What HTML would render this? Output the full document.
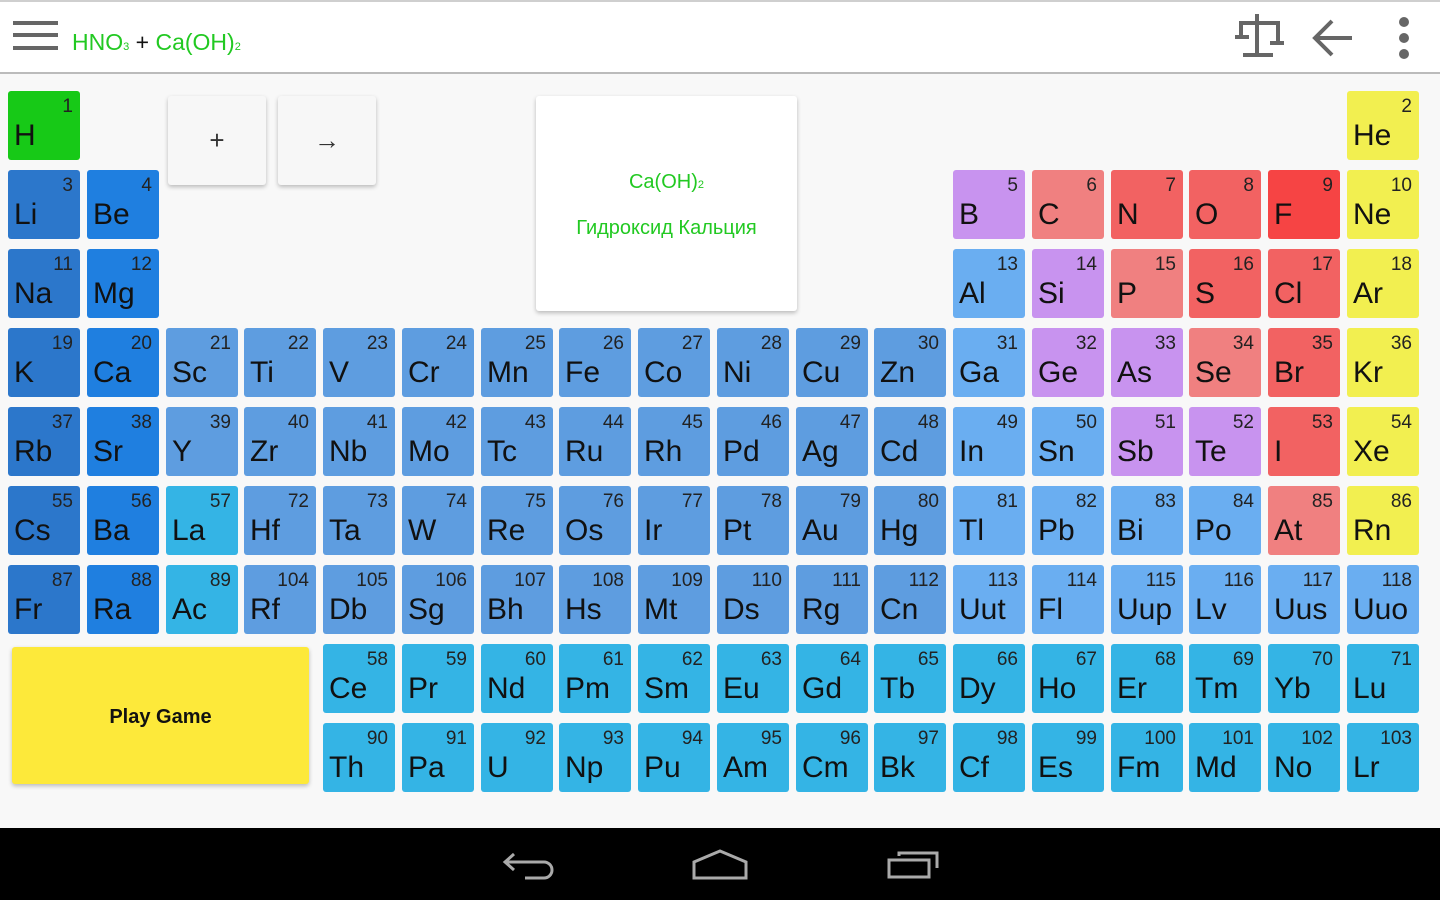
<!DOCTYPE html>
<html><head><meta charset="utf-8"><style>
body{margin:0;width:1440px;height:900px;overflow:hidden;background:#f8f8f8;font-family:"Liberation Sans","Roboto",sans-serif;position:relative}
.hdr{position:absolute;left:0;top:0;width:1440px;height:74px;background:#fff;border-top:2px solid #cfcfcf;border-bottom:2px solid #bbb;box-sizing:border-box}
.c{position:absolute;width:72px;height:69px;border-radius:3px;color:#111;font-size:30px}
.c i{position:absolute;right:7px;top:5px;font-style:normal;font-size:19px;color:#222}
.c b{position:absolute;left:6px;top:28px;font-weight:normal;line-height:34px}
.a{background:#2c77cb}.e{background:#1f7fe0}.t{background:#5e9de0}.p{background:#6aaef1}.m{background:#c893ef}.n{background:#f08080}.r{background:#f26262}.f{background:#f64444}.g{background:#f2ef50}.l{background:#34b4e5}.h{background:#17c917}
.btn{position:absolute;background:#f7f7f7;border-radius:3px;box-shadow:0 2px 4px rgba(0,0,0,.25);display:flex;align-items:center;justify-content:center;color:#333}
.nav{position:absolute;left:0;top:828px;width:1440px;height:72px;background:#000}
</style></head><body>
<div class="hdr">
<svg style="position:absolute;left:13px;top:18px" width="46" height="34"><g fill="#666"><rect x="0" y="1" width="45" height="4"/><rect x="0" y="13" width="45" height="4"/><rect x="0" y="26" width="45" height="4"/></g></svg>
<div style="position:absolute;left:72px;top:27px;font-size:23px;color:#22c922">HNO<span style="font-size:11px">3</span> <span style="color:#111">+</span> Ca(OH)<span style="font-size:11px">2</span></div>
<svg style="position:absolute;left:1230px;top:6px" width="60" height="56" fill="none" stroke="#666" stroke-width="4"><path d="M27 6V47M11 15H48M11 13V29M5 29H19M48 13V35M40 35H54M13 47H43"/></svg>
<svg style="position:absolute;left:1312px;top:16px" width="42" height="40" fill="none" stroke="#666" stroke-width="4"><path d="M40 20H4M20 3L3 20L20 37"/></svg>
<svg style="position:absolute;left:1396px;top:14px" width="16" height="44" fill="#666"><circle cx="8" cy="6" r="5"/><circle cx="8" cy="22" r="5"/><circle cx="8" cy="38" r="5"/></svg>
</div>

<div class="btn" style="left:168px;top:96px;width:98px;height:89px;font-size:26px">+</div>
<div class="btn" style="left:278px;top:96px;width:98px;height:89px;font-size:26px">→</div>
<div class="btn" style="left:536px;top:96px;width:261px;height:215px;background:#fff;flex-direction:column;color:#22c922;font-size:20px"><div style="margin-top:4px">Ca(OH)<span style="font-size:11px">2</span></div><div style="margin-top:23px">Гидроксид Кальция</div></div>
<div class="btn" style="left:12px;top:647px;width:297px;height:137px;background:#fde93a;color:#111;font-weight:bold;font-size:20px;padding-top:4px;box-sizing:border-box">Play Game</div>

<div class="c h" style="left:8px;top:91px"><i>1</i><b>H</b></div>
<div class="c g" style="left:1347px;top:91px"><i>2</i><b>He</b></div>
<div class="c a" style="left:8px;top:170px"><i>3</i><b>Li</b></div>
<div class="c e" style="left:87px;top:170px"><i>4</i><b>Be</b></div>
<div class="c m" style="left:953px;top:170px"><i>5</i><b>B</b></div>
<div class="c n" style="left:1032px;top:170px"><i>6</i><b>C</b></div>
<div class="c r" style="left:1111px;top:170px"><i>7</i><b>N</b></div>
<div class="c r" style="left:1189px;top:170px"><i>8</i><b>O</b></div>
<div class="c f" style="left:1268px;top:170px"><i>9</i><b>F</b></div>
<div class="c g" style="left:1347px;top:170px"><i>10</i><b>Ne</b></div>
<div class="c a" style="left:8px;top:249px"><i>11</i><b>Na</b></div>
<div class="c e" style="left:87px;top:249px"><i>12</i><b>Mg</b></div>
<div class="c p" style="left:953px;top:249px"><i>13</i><b>Al</b></div>
<div class="c m" style="left:1032px;top:249px"><i>14</i><b>Si</b></div>
<div class="c n" style="left:1111px;top:249px"><i>15</i><b>P</b></div>
<div class="c r" style="left:1189px;top:249px"><i>16</i><b>S</b></div>
<div class="c r" style="left:1268px;top:249px"><i>17</i><b>Cl</b></div>
<div class="c g" style="left:1347px;top:249px"><i>18</i><b>Ar</b></div>

<div class="c a" style="left:8px;top:328px"><i>19</i><b>K</b></div>
<div class="c e" style="left:87px;top:328px"><i>20</i><b>Ca</b></div>
<div class="c t" style="left:166px;top:328px"><i>21</i><b>Sc</b></div>
<div class="c t" style="left:244px;top:328px"><i>22</i><b>Ti</b></div>
<div class="c t" style="left:323px;top:328px"><i>23</i><b>V</b></div>
<div class="c t" style="left:402px;top:328px"><i>24</i><b>Cr</b></div>
<div class="c t" style="left:481px;top:328px"><i>25</i><b>Mn</b></div>
<div class="c t" style="left:559px;top:328px"><i>26</i><b>Fe</b></div>
<div class="c t" style="left:638px;top:328px"><i>27</i><b>Co</b></div>
<div class="c t" style="left:717px;top:328px"><i>28</i><b>Ni</b></div>
<div class="c t" style="left:796px;top:328px"><i>29</i><b>Cu</b></div>
<div class="c t" style="left:874px;top:328px"><i>30</i><b>Zn</b></div>
<div class="c p" style="left:953px;top:328px"><i>31</i><b>Ga</b></div>
<div class="c m" style="left:1032px;top:328px"><i>32</i><b>Ge</b></div>
<div class="c m" style="left:1111px;top:328px"><i>33</i><b>As</b></div>
<div class="c n" style="left:1189px;top:328px"><i>34</i><b>Se</b></div>
<div class="c r" style="left:1268px;top:328px"><i>35</i><b>Br</b></div>
<div class="c g" style="left:1347px;top:328px"><i>36</i><b>Kr</b></div>

<div class="c a" style="left:8px;top:407px"><i>37</i><b>Rb</b></div>
<div class="c e" style="left:87px;top:407px"><i>38</i><b>Sr</b></div>
<div class="c t" style="left:166px;top:407px"><i>39</i><b>Y</b></div>
<div class="c t" style="left:244px;top:407px"><i>40</i><b>Zr</b></div>
<div class="c t" style="left:323px;top:407px"><i>41</i><b>Nb</b></div>
<div class="c t" style="left:402px;top:407px"><i>42</i><b>Mo</b></div>
<div class="c t" style="left:481px;top:407px"><i>43</i><b>Tc</b></div>
<div class="c t" style="left:559px;top:407px"><i>44</i><b>Ru</b></div>
<div class="c t" style="left:638px;top:407px"><i>45</i><b>Rh</b></div>
<div class="c t" style="left:717px;top:407px"><i>46</i><b>Pd</b></div>
<div class="c t" style="left:796px;top:407px"><i>47</i><b>Ag</b></div>
<div class="c t" style="left:874px;top:407px"><i>48</i><b>Cd</b></div>
<div class="c p" style="left:953px;top:407px"><i>49</i><b>In</b></div>
<div class="c p" style="left:1032px;top:407px"><i>50</i><b>Sn</b></div>
<div class="c m" style="left:1111px;top:407px"><i>51</i><b>Sb</b></div>
<div class="c m" style="left:1189px;top:407px"><i>52</i><b>Te</b></div>
<div class="c r" style="left:1268px;top:407px"><i>53</i><b>I</b></div>
<div class="c g" style="left:1347px;top:407px"><i>54</i><b>Xe</b></div>

<div class="c a" style="left:8px;top:486px"><i>55</i><b>Cs</b></div>
<div class="c e" style="left:87px;top:486px"><i>56</i><b>Ba</b></div>
<div class="c l" style="left:166px;top:486px"><i>57</i><b>La</b></div>
<div class="c t" style="left:244px;top:486px"><i>72</i><b>Hf</b></div>
<div class="c t" style="left:323px;top:486px"><i>73</i><b>Ta</b></div>
<div class="c t" style="left:402px;top:486px"><i>74</i><b>W</b></div>
<div class="c t" style="left:481px;top:486px"><i>75</i><b>Re</b></div>
<div class="c t" style="left:559px;top:486px"><i>76</i><b>Os</b></div>
<div class="c t" style="left:638px;top:486px"><i>77</i><b>Ir</b></div>
<div class="c t" style="left:717px;top:486px"><i>78</i><b>Pt</b></div>
<div class="c t" style="left:796px;top:486px"><i>79</i><b>Au</b></div>
<div class="c t" style="left:874px;top:486px"><i>80</i><b>Hg</b></div>
<div class="c p" style="left:953px;top:486px"><i>81</i><b>Tl</b></div>
<div class="c p" style="left:1032px;top:486px"><i>82</i><b>Pb</b></div>
<div class="c p" style="left:1111px;top:486px"><i>83</i><b>Bi</b></div>
<div class="c p" style="left:1189px;top:486px"><i>84</i><b>Po</b></div>
<div class="c n" style="left:1268px;top:486px"><i>85</i><b>At</b></div>
<div class="c g" style="left:1347px;top:486px"><i>86</i><b>Rn</b></div>

<div class="c a" style="left:8px;top:565px"><i>87</i><b>Fr</b></div>
<div class="c e" style="left:87px;top:565px"><i>88</i><b>Ra</b></div>
<div class="c l" style="left:166px;top:565px"><i>89</i><b>Ac</b></div>
<div class="c t" style="left:244px;top:565px"><i>104</i><b>Rf</b></div>
<div class="c t" style="left:323px;top:565px"><i>105</i><b>Db</b></div>
<div class="c t" style="left:402px;top:565px"><i>106</i><b>Sg</b></div>
<div class="c t" style="left:481px;top:565px"><i>107</i><b>Bh</b></div>
<div class="c t" style="left:559px;top:565px"><i>108</i><b>Hs</b></div>
<div class="c t" style="left:638px;top:565px"><i>109</i><b>Mt</b></div>
<div class="c t" style="left:717px;top:565px"><i>110</i><b>Ds</b></div>
<div class="c t" style="left:796px;top:565px"><i>111</i><b>Rg</b></div>
<div class="c t" style="left:874px;top:565px"><i>112</i><b>Cn</b></div>
<div class="c p" style="left:953px;top:565px"><i>113</i><b>Uut</b></div>
<div class="c p" style="left:1032px;top:565px"><i>114</i><b>Fl</b></div>
<div class="c p" style="left:1111px;top:565px"><i>115</i><b>Uup</b></div>
<div class="c p" style="left:1189px;top:565px"><i>116</i><b>Lv</b></div>
<div class="c p" style="left:1268px;top:565px"><i>117</i><b>Uus</b></div>
<div class="c p" style="left:1347px;top:565px"><i>118</i><b>Uuo</b></div>

<div class="c l" style="left:323px;top:644px"><i>58</i><b>Ce</b></div>
<div class="c l" style="left:402px;top:644px"><i>59</i><b>Pr</b></div>
<div class="c l" style="left:481px;top:644px"><i>60</i><b>Nd</b></div>
<div class="c l" style="left:559px;top:644px"><i>61</i><b>Pm</b></div>
<div class="c l" style="left:638px;top:644px"><i>62</i><b>Sm</b></div>
<div class="c l" style="left:717px;top:644px"><i>63</i><b>Eu</b></div>
<div class="c l" style="left:796px;top:644px"><i>64</i><b>Gd</b></div>
<div class="c l" style="left:874px;top:644px"><i>65</i><b>Tb</b></div>
<div class="c l" style="left:953px;top:644px"><i>66</i><b>Dy</b></div>
<div class="c l" style="left:1032px;top:644px"><i>67</i><b>Ho</b></div>
<div class="c l" style="left:1111px;top:644px"><i>68</i><b>Er</b></div>
<div class="c l" style="left:1189px;top:644px"><i>69</i><b>Tm</b></div>
<div class="c l" style="left:1268px;top:644px"><i>70</i><b>Yb</b></div>
<div class="c l" style="left:1347px;top:644px"><i>71</i><b>Lu</b></div>

<div class="c l" style="left:323px;top:723px"><i>90</i><b>Th</b></div>
<div class="c l" style="left:402px;top:723px"><i>91</i><b>Pa</b></div>
<div class="c l" style="left:481px;top:723px"><i>92</i><b>U</b></div>
<div class="c l" style="left:559px;top:723px"><i>93</i><b>Np</b></div>
<div class="c l" style="left:638px;top:723px"><i>94</i><b>Pu</b></div>
<div class="c l" style="left:717px;top:723px"><i>95</i><b>Am</b></div>
<div class="c l" style="left:796px;top:723px"><i>96</i><b>Cm</b></div>
<div class="c l" style="left:874px;top:723px"><i>97</i><b>Bk</b></div>
<div class="c l" style="left:953px;top:723px"><i>98</i><b>Cf</b></div>
<div class="c l" style="left:1032px;top:723px"><i>99</i><b>Es</b></div>
<div class="c l" style="left:1111px;top:723px"><i>100</i><b>Fm</b></div>
<div class="c l" style="left:1189px;top:723px"><i>101</i><b>Md</b></div>
<div class="c l" style="left:1268px;top:723px"><i>102</i><b>No</b></div>
<div class="c l" style="left:1347px;top:723px"><i>103</i><b>Lr</b></div>

<div class="nav">
<svg style="position:absolute;left:500px;top:20px" width="60" height="40" fill="none" stroke="#aaa" stroke-width="3"><path d="M14 6L5 14L14 22M5 14H44A7 7 0 0 1 44 30H25"/></svg>
<svg style="position:absolute;left:690px;top:20px" width="60" height="40" fill="none" stroke="#aaa" stroke-width="3"><path d="M4 30V14L30 3L56 14V30Z"/></svg>
<svg style="position:absolute;left:885px;top:20px" width="60" height="40" fill="none" stroke="#aaa" stroke-width="3"><rect x="4" y="12" width="40" height="17"/><path d="M14 8V5H52V20"/></svg>
</div>
</body></html>
